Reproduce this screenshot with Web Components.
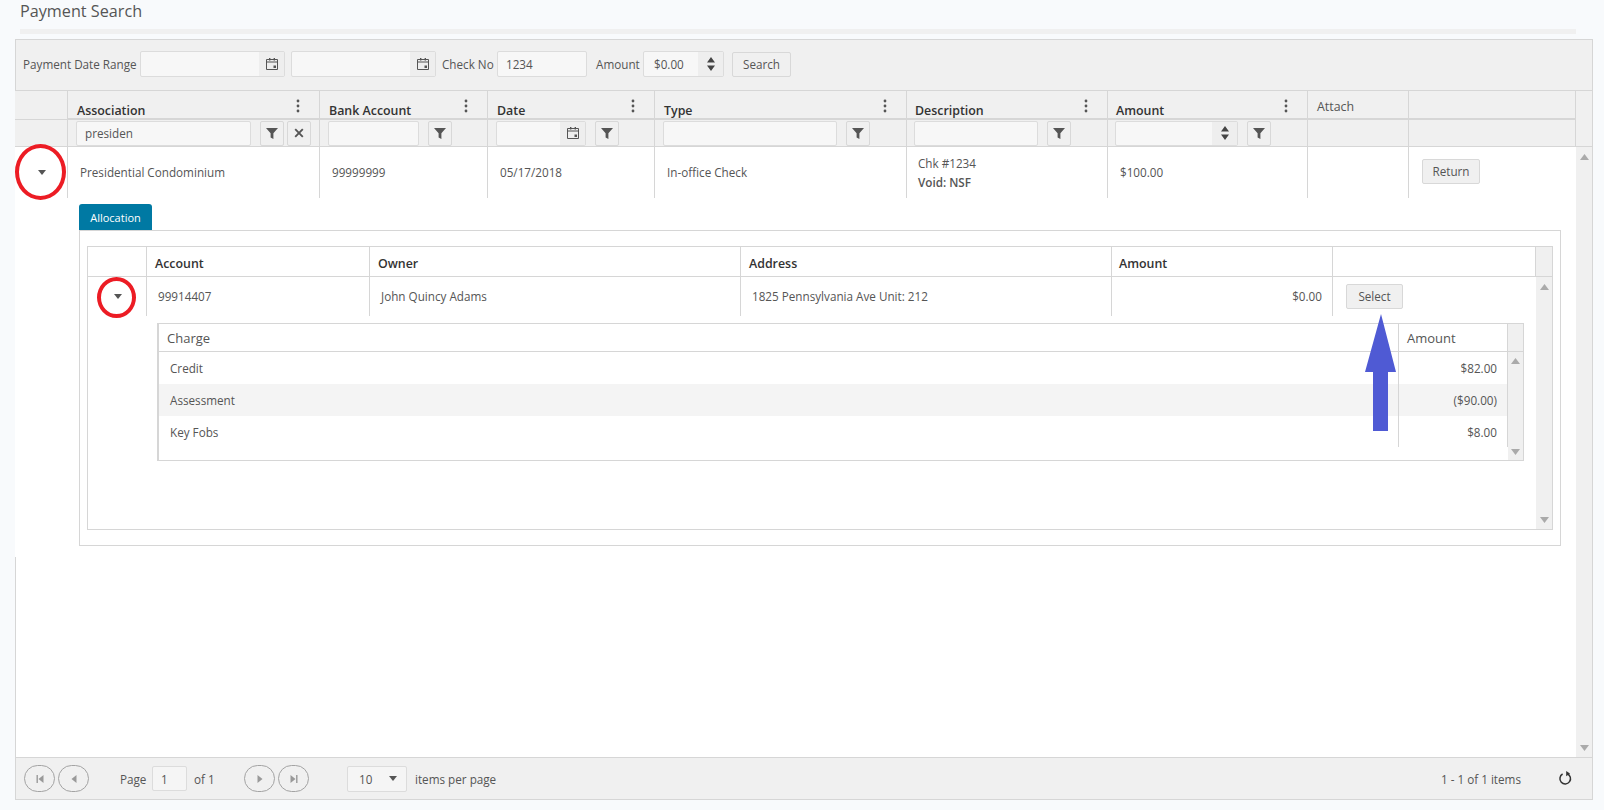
<!DOCTYPE html>
<html lang="en">
<head>
<meta charset="utf-8">
<title>Payment Search</title>
<style>
    html, body { margin: 0; padding: 0; background: #f8fafc; overflow: hidden; }
</style>
</head>
<body>
<pay-page>
    <page-title>Payment Search</page-title>
    <pay-grid>
        <pay-toolbar slot="toolbar">
            <span style="margin-left:7px;width:114px">Payment Date Range</span>
            <k-field icon="date" style="width:145px;height:26px;margin-left:3px"></k-field>
            <k-field icon="date" style="width:145px;height:26px;margin-left:6px"></k-field>
            <span style="margin-left:6px;width:52px">Check No</span>
            <k-field style="width:90px;height:26px;margin-left:3px">1234</k-field>
            <span style="margin-left:9px;width:43px">Amount</span>
            <k-field icon="spin" style="width:81px;height:26px;margin-left:4px;--pad:10px">$0.00</k-field>
            <k-btn style="width:59px;margin-left:8px">Search</k-btn>
        </pay-toolbar>

        <g-row slot="head" cols="53 252 168 167 252 201 200 101 167 17" style="height:30px;border-top:1px solid #d6d6d6">
            <g-cell head></g-cell>
            <h-cell>Association</h-cell>
            <h-cell>Bank Account</h-cell>
            <h-cell>Date</h-cell>
            <h-cell>Type</h-cell>
            <h-cell style="padding-left:8px">Description</h-cell>
            <h-cell style="padding-left:8px">Amount</h-cell>
            <h-cell plain>Attach</h-cell>
            <h-cell plain></h-cell>
            <g-cell head last></g-cell>
        </g-row>
        <g-row slot="head" cols="53 252 168 167 252 201 200 101 167 17" style="height:27px">
            <g-cell head></g-cell>
            <f-cell><k-field style="width:175px">presiden</k-field><k-btn tool="filter"></k-btn><k-btn tool="close" style="margin-left:-6px"></k-btn></f-cell>
            <f-cell><k-field style="width:91px"></k-field><k-btn tool="filter"></k-btn></f-cell>
            <f-cell><k-field icon="date" style="width:90px"></k-field><k-btn tool="filter"></k-btn></f-cell>
            <f-cell><k-field style="width:174px"></k-field><k-btn tool="filter"></k-btn></f-cell>
            <f-cell style="padding-left:7px"><k-field style="width:124px"></k-field><k-btn tool="filter"></k-btn></f-cell>
            <f-cell style="padding-left:7px"><k-field icon="spin" style="width:123px"></k-field><k-btn tool="filter"></k-btn></f-cell>
            <g-cell head></g-cell>
            <g-cell head></g-cell>
            <g-cell head></g-cell>
        </g-row>

        <g-row cols="53 252 168 167 252 201 200 101 167" style="height:51px">
            <g-cell center><k-icon name="caret"></k-icon></g-cell>
            <g-cell>Presidential Condominium</g-cell>
            <g-cell>99999999</g-cell>
            <g-cell>05/17/2018</g-cell>
            <g-cell>In-office Check</g-cell>
            <g-cell style="padding-left:11px"><div>Chk #1234<br><span style="font-weight:600">Void: NSF</span></div></g-cell>
            <g-cell>$100.00</g-cell>
            <g-cell></g-cell>
            <g-cell noline style="padding-left:13px;padding-bottom:2px"><k-btn style="width:58px">Return</k-btn></g-cell>
        </g-row>

        <detail-panel>
            <sub-grid style="margin:0 7px;height:284px">
                <g-row slot="head" light cols="59 223 371 371 221 203 16" style="height:30px">
                    <g-cell sub></g-cell>
                    <g-cell sub title>Account</g-cell>
                    <g-cell sub title>Owner</g-cell>
                    <g-cell sub title>Address</g-cell>
                    <g-cell sub title style="padding-left:7px">Amount</g-cell>
                    <g-cell sub></g-cell>
                    <g-cell sub last></g-cell>
                </g-row>
                <g-row cols="59 223 371 371 221 203" style="height:39px">
                    <g-cell center><k-icon name="caret"></k-icon></g-cell>
                    <g-cell style="padding-left:11px">99914407</g-cell>
                    <g-cell style="padding-left:11px">John Quincy Adams</g-cell>
                    <g-cell style="padding-left:11px">1825 Pennsylvania Ave Unit: 212</g-cell>
                    <g-cell end>$0.00</g-cell>
                    <g-cell noline style="padding-left:13px"><k-btn style="width:57px">Select</k-btn></g-cell>
                </g-row>
                <sub-grid nested style="margin:7px 0 0 69px;width:1367px;height:138px">
                    <g-row slot="head" light cols="1240 109 15" style="height:28px">
                        <g-cell sub plain>Charge</g-cell>
                        <g-cell sub plain>Amount</g-cell>
                        <g-cell sub last></g-cell>
                    </g-row>
                    <g-row cols="1240 109" style="height:32px"><g-cell style="padding-left:11px">Credit</g-cell><g-cell end>$82.00</g-cell></g-row>
                    <g-row alt cols="1240 109" style="height:32px"><g-cell style="padding-left:11px">Assessment</g-cell><g-cell end>($90.00)</g-cell></g-row>
                    <g-row cols="1240 109" style="height:31px"><g-cell style="padding:1px 12px 0 11px">Key Fobs</g-cell><g-cell end style="padding-top:1px">$8.00</g-cell></g-row>
                </sub-grid>
            </sub-grid>
        </detail-panel>

        <pay-pager slot="pager">
            <pager-btn name="first" style="margin-left:8px"></pager-btn>
            <pager-btn name="prev" style="margin-left:3px"></pager-btn>
            <span style="margin-left:31px;width:27px">Page</span>
            <k-field plain style="width:35px;margin-left:5px">1</k-field>
            <span style="margin-left:7px;width:20px">of 1</span>
            <pager-btn name="next" style="margin-left:30px"></pager-btn>
            <pager-btn name="last" style="margin-left:3px"></pager-btn>
            <k-field icon="caret" plain style="width:60px;height:26px;margin-left:38px;--pad:11px">10</k-field>
            <span style="margin-left:8px">items per page</span>
            <span style="margin-left:auto">1 - 1 of 1 items</span>
            <k-icon name="refresh" style="margin:0 19px 0 37px"></k-icon>
        </pay-pager>
    </pay-grid>

    <mark-ring style="left:15px;top:144px;width:51px;height:56px"></mark-ring>
    <mark-ring style="left:97px;top:277px;width:39px;height:41px"></mark-ring>
    <mark-arrow style="left:1365px;top:314px"></mark-arrow>
</pay-page>

<script>
const FONT = `font-family:"Open Sans","Noto Sans","Liberation Sans",sans-serif;`;
const LINE = '#d6d6d6';

const ICONS = {
    filter: '<svg width="14" height="14" viewBox="0 0 14 14"><path d="M1 2h12L8.4 7.2V13L5.6 11.400V7.2z" fill="#555"/></svg>',
    close: '<svg width="12" height="12" viewBox="0 0 12 12"><path d="M2.2 2.2l7.6 7.6M9.8 2.2L2.2 9.800" stroke="#555" stroke-width="1.900" fill="none"/></svg>',
    kebab: '<svg width="4" height="14" viewBox="0 0 4 14"><circle cx="2" cy="2" r="1.400" fill="#555"/><circle cx="2" cy="7" r="1.400" fill="#555"/><circle cx="2" cy="12" r="1.400" fill="#555"/></svg>',
    date: '<svg width="14" height="14" viewBox="0 0 14 14"><path d="M1.500 2.500h11v10h-11zM1.500 5h11" stroke="#555" fill="none"/><path d="M4 1h1.400v2.600H4zM8.600 1H10v2.600H8.600zM8.500 8.500H11V11H8.500z" fill="#555"/></svg>',
    spin: '<svg width="10" height="16" viewBox="0 0 10 16"><path d="M5 1l4 5.500H1zM5 15L1 9.500h8z" fill="#444"/></svg>',
    caret: '<svg width="8" height="5" viewBox="0 0 8 5"><path d="M0 0h8L4 5z" fill="#555"/></svg>',
    refresh: '<svg width="15" height="15" viewBox="0 0 15 15"><path d="M9.200 2.700A5.300 5.300 0 1 1 4.600 3" stroke="#333" stroke-width="1.500" fill="none"/><path d="M8.200 0v5.200L12 2.600z" fill="#333"/></svg>',
    first: '<svg width="10" height="10" viewBox="0 0 10 10"><path d="M1.500 1h1.400v8H1.500zM8.500 1v8L3.500 5z" fill="#999"/></svg>',
    prev: '<svg width="10" height="10" viewBox="0 0 10 10"><path d="M7.500 1v8L2.500 5z" fill="#999"/></svg>',
    next: '<svg width="10" height="10" viewBox="0 0 10 10"><path d="M2.500 1v8l5-4z" fill="#999"/></svg>',
    last: '<svg width="10" height="10" viewBox="0 0 10 10"><path d="M7.100 1h1.400v8H7.100zM1.500 1v8l5-4z" fill="#999"/></svg>',
    up: '<svg width="9" height="6" viewBox="0 0 9 6"><path d="M4.500 0L9 6H0z" fill="#aaa"/></svg>',
    down: '<svg width="9" height="6" viewBox="0 0 9 6"><path d="M0 0h9L4.500 6z" fill="#aaa"/></svg>'
};

// small base class, every element only brings its own css and markup
class ShadowEl extends HTMLElement {
    constructor() {
        super();
        const shadowRoot = this.attachShadow({ mode: 'open' });
        shadowRoot.innerHTML = `<style>*,:host{box-sizing:border-box} ${this.constructor.css}</style>${this.constructor.html}`;
    }
}

function define(name, css, html = '<slot></slot>', extra) {
    const cls = class extends ShadowEl {
        connectedCallback() {
            if (extra) extra.call(this);
        }
    };
    cls.css = css;
    cls.html = html;
    customElements.define(name, cls);
}

define('pay-page', `
    :host { display:block; position:relative; width:1604px; height:810px; padding-left:15px; ${FONT} font-size:11.7px; color:#555; }
`);

define('page-title', `
    :host { display:block; height:39px; padding-left:5px; width:1561px; font-size:16.2px; color:#555; }
    #text { height:29px; line-height:22px; }
    #bar { height:5px; background:#f0f0f0; }
`, '<div id="text"><slot></slot></div><div id="bar"></div>');

define('pay-grid', `
    :host { display:flex; flex-direction:column; width:1578px; height:761px; }
    #body { flex:1; display:flex; min-height:0; }
    #rows { flex:1; background:#fff; display:flex; flex-direction:column; }
    #filler { flex:1; border-left:1px solid ${LINE}; }
    #main { height:410px; }
    #scroll { width:17px; background:#f0f0f0; border-right:1px solid ${LINE}; display:flex; flex-direction:column; justify-content:space-between; align-items:center; padding:7px 0 6px; }
`, `
    <slot name="toolbar"></slot>
    <slot name="head"></slot>
    <div id="body">
        <div id="rows"><div id="main"><slot></slot></div><div id="filler"></div></div>
        <div id="scroll"><k-icon name="up"></k-icon><k-icon name="down"></k-icon></div>
    </div>
    <slot name="pager"></slot>
`);

define('pay-toolbar', `
    :host { display:flex; align-items:center; height:51px; background:#f0f0f0; border:1px solid ${LINE}; border-bottom:0; padding-bottom:2px; white-space:nowrap; }
`);

define('g-row', `
    :host { display:grid; }
    :host([slot="head"]) { background:#f0f0f0; }
    :host([light]) { background:#fff; }
    :host([alt]) { background:#f4f4f4; }
`, '<slot></slot>', function () {
    const cols = this.getAttribute('cols').split(' ').map(c => c + 'px').join(' ');
    this.style.gridTemplateColumns = cols;
});

define('g-cell', `
    :host { display:flex; align-items:center; min-width:0; padding:0 12px; border-right:1px solid ${LINE}; color:#555; white-space:nowrap; line-height:19px; }
    :host([center]) { justify-content:center; padding:0 0 0 1px; }
    :host([end]) { justify-content:flex-end; padding-right:10px; }
    :host([noline]) { border-right:0; }
    :host([head]) { border-bottom:1px solid ${LINE}; padding:0; }
    :host([head][last]) { border-bottom:0; }
    :host([sub]) { border-bottom:1px solid ${LINE}; padding:0 8px; }
    :host([sub][title]) { color:#333; font-weight:600; font-size:12.4px; padding-top:3px; }
    :host([sub][plain]) { font-size:13px; color:#555; padding:1px 8px 0; }
    :host([sub][last]) { background:#f0f0f0; border-right:0; padding:0; }
`);

define('h-cell', `
    :host { display:flex; justify-content:space-between; min-width:0; border-bottom:2px solid ${LINE}; border-right:1px solid ${LINE}; padding:0 19px 0 9px; color:#333; font-weight:600; font-size:12.4px; white-space:nowrap; }
    #t { height:27px; padding-top:11px; line-height:18px; }
    #k { padding-top:8px; line-height:0; }
    :host([plain]) { font-weight:400; color:#555; font-size:12.4px; }
    :host([plain]) #t { padding-top:7px; }
    :host([plain]) #k { display:none; }
`, `<div id="t"><slot></slot></div><div id="k"><k-icon name="kebab"></k-icon></div>`);

define('f-cell', `
    :host { display:flex; align-items:center; gap:9px; min-width:0; border-bottom:1px solid ${LINE}; border-right:1px solid ${LINE}; padding:0 0 0 8px; }
`);

define('k-icon', `
    :host { display:inline-flex; line-height:0; }
`, '<span id="i"></span>', function () {
    this.shadowRoot.getElementById('i').innerHTML = ICONS[this.getAttribute('name')];
});

define('k-field', `
    :host { display:inline-flex; flex:none; height:25px; border:1px solid #dcdcdc; border-radius:2px; background:#f7f7f7; color:#555; overflow:hidden; }
    #v { flex:1; display:flex; align-items:center; padding:0 var(--pad, 8px); min-width:0; white-space:nowrap; }
    #a { display:none; width:25px; align-items:center; justify-content:center; background:#eeeeee; }
    :host([icon]) #a { display:flex; }
    :host([plain]) #a { background:transparent; width:26px; }
    :host([plain]) { background:#f5f5f5; }
`, `<div id="v"><slot></slot></div><div id="a"></div>`, function () {
    const icon = this.getAttribute('icon');
    if (icon) this.shadowRoot.getElementById('a').innerHTML = `<k-icon name="${icon}"></k-icon>`;
});

define('k-btn', `
    :host { display:inline-flex; flex:none; align-items:center; justify-content:center; height:25px; border:1px solid #d8d8d8; border-radius:2px; background:#f0f0f0; color:#555; white-space:nowrap; }
    :host([tool]) { width:24px; }
`, '<slot></slot><span id="i"></span>', function () {
    const tool = this.getAttribute('tool');
    const i = this.shadowRoot.getElementById('i');
    i.style.lineHeight = 0;
    if (tool) i.innerHTML = `<k-icon name="${tool}"></k-icon>`;
});

define('detail-panel', `
    :host { display:block; height:359px; padding:6px 0 0 64px; }
    #tab { display:flex; align-items:center; justify-content:center; width:73px; height:26px; background:#0079a3; color:#fff; border-radius:3px 3px 0 0; font-size:11px; }
    #panel { width:1482px; height:316px; border:1px solid ${LINE}; padding-top:15px; }
`, `<div id="tab">Allocation</div><div id="panel"><slot></slot></div>`);

define('sub-grid', `
    :host { display:flex; flex-direction:column; border:1px solid ${LINE}; background:#fff; }
    :host([nested]) { border-left-width:2px; }
    #b { flex:1; display:flex; min-height:0; }
    #m { flex:1; min-width:0; }
    #s { width:16px; background:#f0f0f0; display:flex; flex-direction:column; justify-content:space-between; align-items:center; padding:7px 0 6px; }
    :host([nested]) #s { width:15px; padding:6px 0 5px; }
`, `<slot name="head"></slot><div id="b"><div id="m"><slot></slot></div><div id="s"><k-icon name="up"></k-icon><k-icon name="down"></k-icon></div></div>`);

define('pay-pager', `
    :host { display:flex; align-items:center; height:43px; background:#f0f0f0; border:1px solid ${LINE}; color:#555; white-space:nowrap; }
`);

define('pager-btn', `
    :host { display:inline-flex; flex:none; align-items:center; justify-content:center; width:31px; height:27px; border:1px solid #a3a3a3; border-radius:14px; }
`, '<span id="i" style="line-height:0"></span>', function () {
    this.shadowRoot.getElementById('i').innerHTML = `<k-icon name="${this.getAttribute('name')}"></k-icon>`;
});

define('mark-ring', `
    :host { position:absolute; display:block; border:4px solid #ec1c24; border-radius:50%; }
`, '');

define('mark-arrow', `
    :host { position:absolute; display:block; width:32px; height:117px; line-height:0; }
`, '<svg width="32" height="117" viewBox="0 0 32 117"><path d="M16 0L31 58H23V117H8V58H0z" fill="#4f5ad4"/></svg>');
</script>
</body>
</html>
